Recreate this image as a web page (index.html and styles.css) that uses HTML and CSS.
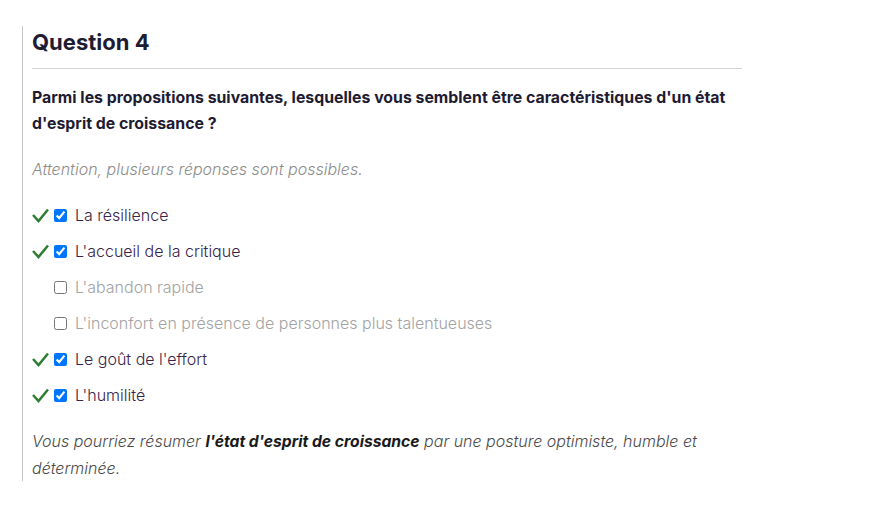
FILE: index.html
```html
<!DOCTYPE html>
<html lang="fr">
<head>
<meta charset="utf-8">
<link rel="stylesheet" href="styles.css">
</head>
<body>
<div class="question">
  <h2 class="title">Question 4</h2>
  <p class="prompt">Parmi les propositions suivantes, lesquelles vous semblent être caractéristiques d'un état d'esprit de croissance ?</p>
  <p class="note">Attention, plusieurs réponses sont possibles.</p>
  <ul class="options">
    <li class="option correct"><span class="mark"><svg viewBox="0 0 17 15" width="17" height="15"><polyline points="1,7 6.5,13 16,1.5" fill="none" stroke="#2e7d32" stroke-width="2.5"/></svg></span><input type="checkbox" checked class="box"><span class="label">La résilience</span></li>
    <li class="option correct"><span class="mark"><svg viewBox="0 0 17 15" width="17" height="15"><polyline points="1,7 6.5,13 16,1.5" fill="none" stroke="#2e7d32" stroke-width="2.5"/></svg></span><input type="checkbox" checked class="box"><span class="label">L'accueil de la critique</span></li>
    <li class="option wrong"><span class="mark"></span><input type="checkbox" class="box"><span class="label">L'abandon rapide</span></li>
    <li class="option wrong"><span class="mark"></span><input type="checkbox" class="box"><span class="label">L'inconfort en présence de personnes plus talentueuses</span></li>
    <li class="option correct"><span class="mark"><svg viewBox="0 0 17 15" width="17" height="15"><polyline points="1,7 6.5,13 16,1.5" fill="none" stroke="#2e7d32" stroke-width="2.5"/></svg></span><input type="checkbox" checked class="box"><span class="label">Le goût de l'effort</span></li>
    <li class="option correct"><span class="mark"><svg viewBox="0 0 17 15" width="17" height="15"><polyline points="1,7 6.5,13 16,1.5" fill="none" stroke="#2e7d32" stroke-width="2.5"/></svg></span><input type="checkbox" checked class="box"><span class="label">L'humilité</span></li>
  </ul>
  <p class="feedback">Vous pourriez résumer <strong>l'état d'esprit de croissance</strong> par une posture optimiste, humble et déterminée.</p>
</div>
</body>
</html>
```
FILE: styles.css
```css
html, body {
  margin: 0;
  padding: 0;
  background: #fff;
}
body {
  font-family: Inter, "Noto Sans", sans-serif;
  color: #2f2b3a;
}
.question {
  margin: 26px 0 0 22px;
  border-left: 1px solid #c8c8c8;
  padding-left: 9px;
  width: 710px;
}
.title {
  margin: 0;
  font-size: 22px;
  line-height: 32px;
  font-weight: 700;
  color: #1e1b33;
  padding-bottom: 10px;
  border-bottom: 1px solid #d4d4d4;
}
.prompt {
  margin: 16px 0 0;
  font-size: 15.85px;
  line-height: 26px;
  font-weight: 700;
  color: #1e1b33;
}
.note {
  margin: 19px 0 0;
  font-size: 16px;
  line-height: 26px;
  font-style: italic;
  font-weight: 300;
  color: #8c8c8c;
}
.options {
  list-style: none;
  margin: 15px 0 0;
  padding: 0;
}
.option {
  display: flex;
  align-items: center;
  height: 36px;
  font-size: 16px;
  font-weight: 300;
}
.mark {
  width: 17px;
  height: 15px;
  display: flex;
  margin-right: 5px;
}
.box {
  margin: 0 8px 0 0;
  width: 13px;
  height: 13px;
}
.correct .label {
  color: #3a2348;
}
.wrong .label {
  color: #a3a3a3;
}
.feedback {
  margin: 15px 0 0;
  font-size: 16px;
  line-height: 26px;
  font-style: italic;
  font-weight: 300;
  color: #4a4a4a;
}
.feedback strong {
  color: #1a1a1a;
  font-weight: 700;
  font-size: 15.7px;
}
```
